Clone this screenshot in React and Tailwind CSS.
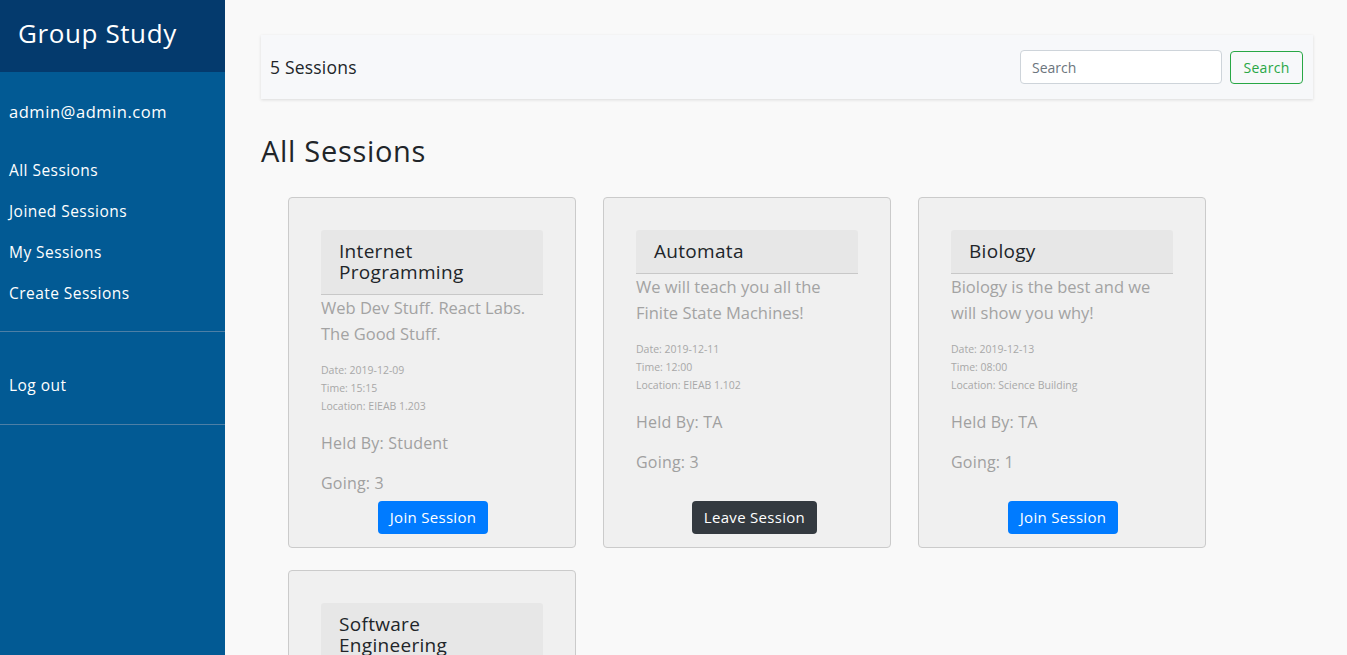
import React from 'react';

const sessions = [
  {
    title: 'Internet Programming',
    description: 'Web Dev Stuff. React Labs. The Good Stuff.',
    date: '2019-12-09',
    time: '15:15',
    location: 'EIEAB 1.203',
    heldBy: 'Student',
    going: 3,
    joined: false,
  },
  {
    title: 'Automata',
    description: 'We will teach you all the Finite State Machines!',
    date: '2019-12-11',
    time: '12:00',
    location: 'EIEAB 1.102',
    heldBy: 'TA',
    going: 3,
    joined: true,
  },
  {
    title: 'Biology',
    description: 'Biology is the best and we will show you why!',
    date: '2019-12-13',
    time: '08:00',
    location: 'Science Building',
    heldBy: 'TA',
    going: 1,
    joined: false,
  },
  {
    title: 'Software Engineering',
    description: 'Design patterns, testing and all the process you need.',
    date: '2019-12-16',
    time: '10:00',
    location: 'EIEAB 1.301',
    heldBy: 'Student',
    going: 2,
    joined: false,
  },
];

const SessionCard = ({ session }) => {
  const { title, description, date, time, location, heldBy, going, joined } = session;

  return (
    <div className="flex flex-col rounded-[4px] border border-[#cbcbcb] bg-[#f0f0f0] px-[32px] pt-[32px] pb-[13px]">
      {/* Title */}
      <div className="rounded-t-[3px] border-b border-[#c8c8c8] bg-[#e7e7e7] py-[11px] pl-[18px] pr-[44px]">
        <h3 className="text-[19px] leading-[21px] tracking-[0.3px] text-[#212529]">{title}</h3>
      </div>

      <p className="text-[16.5px] leading-[26px] text-[#a3a3a3]">{description}</p>

      <div className="mt-[14px] text-[10.5px] leading-[18px] text-[#a8a8a8]">
        <div>Date: {date}</div>
        <div>Time: {time}</div>
        <div>Location: {location}</div>
      </div>

      <p className="mt-[16px] text-[16px] leading-[24px] tracking-[0.2px] text-[#a0a0a0]">Held By: {heldBy}</p>
      <p className="mt-[16px] text-[16px] leading-[24px] tracking-[0.2px] text-[#a0a0a0]">Going: {going}</p>

      <div className="mt-auto flex justify-center pt-[6px]">
        {joined ? (
          <button className="ml-[15px] h-[33px] rounded-[4px] bg-[#343a40] px-[12px] text-[15px] tracking-[0.3px] text-white">
            Leave Session
          </button>
        ) : (
          <button className="ml-[2px] h-[33px] rounded-[4px] bg-[#007bff] px-[12px] text-[15px] tracking-[0.3px] text-white">
            Join Session
          </button>
        )}
      </div>
    </div>
  );
};

const App = () => {
  const navItems = ['All Sessions', 'Joined Sessions', 'My Sessions', 'Create Sessions'];

  return (
    <div className="flex min-h-screen bg-[#f9f9f9] font-['Open_Sans',sans-serif]">
      {/* Sidebar */}
      <aside className="w-[225px] shrink-0 bg-[#025a94] text-white">
        <div className="flex h-[72px] items-center bg-[#043a6d] px-[18px] pb-[6px]">
          <h1 className="text-[26px] font-medium leading-none tracking-[0.6px]">Group Study</h1>
        </div>

        <div className="mt-[28px] px-[9px] text-[16.5px] leading-[24px] tracking-[0.55px]">admin@admin.com</div>

        <nav className="mt-[26px]">
          {navItems.map((item) => (
            <a key={item} href="#" className="block px-[9px] text-[15.5px] font-medium leading-[41px] tracking-[0.45px]">
              {item}
            </a>
          ))}
        </nav>

        <div className="mt-[17px] border-t border-[#4d7fa6]" />
        <a href="#" className="mt-[33px] block px-[9px] text-[15.5px] font-medium leading-[41px] tracking-[0.45px]">
          Log out
        </a>
        <div className="mt-[18px] border-t border-[#4d7fa6]" />
      </aside>

      {/* Main */}
      <main className="flex-1 pt-[35px] pl-[36px] pr-[34px]">
        <div className="flex h-[64px] items-center justify-between bg-[#f7f8fa] pl-[9px] pr-[10px] shadow-[0_1px_3px_rgba(0,0,0,0.12)]">
          <span className="text-[17.5px] tracking-[0.2px] text-[#212529]">5 Sessions</span>
          <div className="flex items-center gap-[8px]">
            <input
              type="text"
              placeholder="Search"
              className="h-[34px] w-[202px] rounded-[4px] border border-[#ced4da] bg-white px-[11px] text-[14px] text-[#495057] placeholder:text-[#6c757d] outline-none"
            />
            <button className="h-[33px] w-[73px] rounded-[4px] border border-[#28a745] text-[14px] tracking-[0.3px] text-[#28a745]">
              Search
            </button>
          </div>
        </div>

        <h2 className="mt-[34px] text-[29px] leading-[36px] tracking-[0.7px] text-[#212529]">All Sessions</h2>

        <div className="mt-[28px] grid grid-cols-[repeat(3,288px)] gap-x-[27px] gap-y-[22px] pl-[27px]">
          {sessions.map((session) => (
            <SessionCard key={session.title} session={session} />
          ))}
        </div>
      </main>
    </div>
  );
};

export default App;
